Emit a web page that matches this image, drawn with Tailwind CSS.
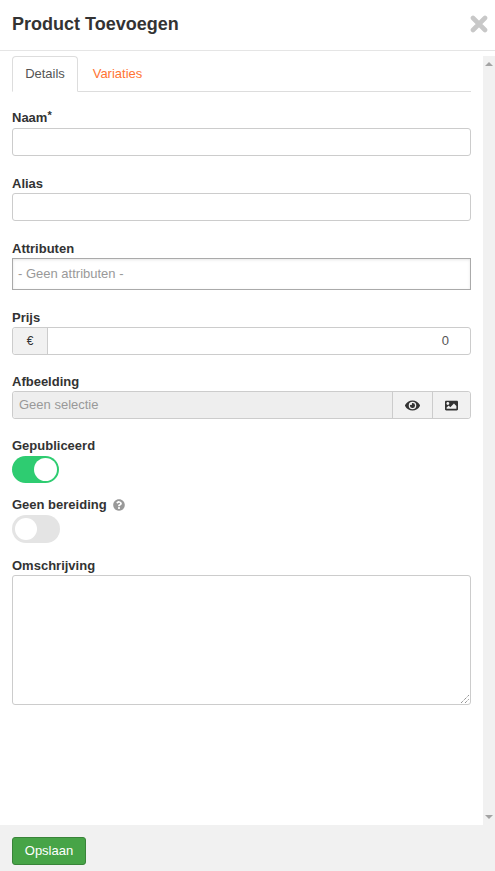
<!DOCTYPE html>
<html lang="nl">
<head>
    <meta charset="UTF-8">
    <meta name="viewport" content="width=device-width, initial-scale=1.0">
    <title>Product Toevoegen</title>
    <script src="https://cdn.jsdelivr.net/npm/@tailwindcss/browser@4"></script>
</head>
<body class="h-[871px] w-[495px] overflow-hidden bg-white flex flex-col font-['Liberation_Sans',Arial,sans-serif] text-[#333]">
    <!-- header -->
    <div class="h-[51px] shrink-0 border-b border-[#e5e5e5] pl-3 pr-[7px] flex items-center justify-between">
        <h1 class="text-[18px] leading-5 font-bold text-[#333] -mt-[2px]">Product Toevoegen</h1>
        <svg class="w-[18px] h-[18px] -mt-[3px]" viewBox="0 0 18 18"><path d="M3 3 L15 15 M15 3 L3 15" stroke="#c8c8c8" stroke-width="4.6" stroke-linecap="round"/></svg>
    </div>

    <!-- body -->
    <div class="flex-1 min-h-0 flex">
        <div class="w-[483px] pl-3 pr-3 pt-[5px]">
            <div class="flex h-[36px] border-b border-[#ddd]">
                <div class="h-[36px] w-[66px] border border-[#ddd] border-b-white rounded-t-[4px] bg-white text-[13px] text-[#555] flex items-center justify-center">Details</div>
                <div class="h-[35px] w-[79px] text-[13px] text-[#ff7433] flex items-center justify-center">Variaties</div>
            </div>

            <div class="flex flex-col mt-[18px]">
                <label class="block text-[13px] leading-[16px] font-bold h-[18px]">Naam<span class="text-[11px] leading-[11px] align-top">*</span></label>
                <div class="h-[28px] border border-[#ccc] rounded-[3px]"></div>

                <label class="block text-[13px] leading-[18px] font-bold h-[18px] mt-[19px]">Alias</label>
                <div class="h-[28px] border border-[#ccc] rounded-[3px]"></div>

                <label class="block text-[13px] leading-[18px] font-bold h-[18px] mt-[19px]">Attributen</label>
                <div class="h-[32px] border border-[#aaa] shadow-[inset_0_1px_3px_rgba(0,0,0,0.1)] px-[5px] flex items-center text-[13px] text-[#999]">- Geen attributen -</div>

                <label class="block text-[13px] leading-[18px] font-bold h-[18px] mt-[19px]">Prijs</label>
                <div class="h-[28px] flex border border-[#ccc] rounded-[3px]">
                    <div class="w-[35px] bg-[#f1f1f1] border-r border-[#ccc] rounded-l-[3px] flex items-center justify-center text-[12px]">€</div>
                    <div class="flex-1 flex items-center justify-end pr-[21px] text-[13px] text-[#555]">0</div>
                </div>

                <label class="block text-[13px] leading-[18px] font-bold h-[18px] mt-[18px]">Afbeelding</label>
                <div class="h-[28px] flex border border-[#ccc] rounded-[3px]">
                    <div class="flex-1 bg-[#eee] rounded-l-[3px] pl-[6px] flex items-center text-[13px] text-[#999]">Geen selectie</div>
                    <div class="w-[40px] bg-[#f1f1f1] border-l border-[#ccc] flex items-center justify-center">
                        <svg class="w-[15px] h-[15px]" viewBox="0 0 576 512"><path fill="#333" d="M572.5 241.4C518.3 135.6 410.9 64 288 64S57.7 135.6 3.5 241.4a32.4 32.4 0 0 0 0 29.2C57.7 376.4 165.1 448 288 448s230.300-71.600 284.500-177.400a32.400 32.400 0 0 0 0-29.200zM288 400a144 144 0 1 1 144-144 143.900 143.900 0 0 1-144 144zm0-240a95.300 95.300 0 0 0-25.300 3.800 47.900 47.900 0 0 1-66.900 66.900A95.800 95.800 0 1 0 288 160z"/></svg>
                    </div>
                    <div class="w-[38px] bg-[#f1f1f1] border-l border-[#ccc] rounded-r-[3px] flex items-center justify-center">
                        <svg class="w-[13px] h-[13px]" viewBox="0 0 512 512"><path fill="#333" d="M464 448H48c-26.500 0-48-21.500-48-48V112c0-26.500 21.500-48 48-48h416c26.500 0 48 21.500 48 48v288c0 26.500-21.500 48-48 48zM112 120c-30.900 0-56 25.100-56 56s25.100 56 56 56 56-25.100 56-56-25.100-56-56-56zM64 384h384V272l-87.500-87.500c-4.700-4.700-12.300-4.700-17 0L208 320l-55.500-55.500c-4.700-4.700-12.300-4.700-17 0L64 336v48z"/></svg>
                    </div>
                </div>

                <label class="block text-[13px] leading-[18px] font-bold h-[19px] mt-[18px]">Gepubliceerd</label>
                <div class="h-[27px] w-[47px] rounded-full bg-[#2ecc71] flex items-center justify-end pr-[2px]">
                    <div class="w-[23px] h-[23px] rounded-full bg-white"></div>
                </div>

                <label class="mt-[12px] text-[13px] leading-[19px] font-bold h-[20px] flex items-start gap-[6px]">
                    Geen bereiding
                    <svg class="w-[12px] h-[12px] mt-[4px]" viewBox="0 0 512 512"><path fill="#999" d="M504 256c0 137-111 248-248 248S8 393 8 256 119 8 256 8s248 111 248 248zM262.700 90c-54.500 0-89.300 23-116.500 63.800-3.500 5.300-2.400 12.400 2.700 16.300l34.700 26.300c5.200 3.900 12.600 3 16.700-2.100 17.900-22.700 30.100-35.800 57.300-35.800 20.400 0 45.700 13.100 45.700 32.900 0 15-12.400 22.700-32.500 34-23.500 13.200-54.600 29.600-54.600 70.500V302c0 6.600 5.400 12 12 12h56c6.600 0 12-5.400 12-12v-1.400c0-28.400 82.800-29.500 82.800-106.200 0-57.700-59.900-102.400-116.300-102.400zM256 338c-25.300 0-45.800 20.500-45.800 45.800 0 25.300 20.500 45.800 45.800 45.800s45.800-20.500 45.800-45.800c0-25.300-20.500-45.800-45.800-45.800z"/></svg>
                </label>
                <div class="h-[28px] w-[48px] rounded-full bg-[#e4e4e4] flex items-center pl-[3px]">
                    <div class="w-[22px] h-[22px] rounded-full bg-white"></div>
                </div>

                <label class="block text-[13px] leading-[18px] font-bold h-[18px] mt-[14px]">Omschrijving</label>
                <div class="h-[130px] border border-[#ccc] rounded-[3px] relative">
                    <svg class="absolute right-0 bottom-0 w-[10px] h-[10px]" viewBox="0 0 10 10"><path d="M1 9 L9 1 M5 9 L9 5" stroke="#666" stroke-width="1" stroke-dasharray="1 1" fill="none"/></svg>
                </div>
            </div>
        </div>

        <!-- scrollbar -->
        <div class="w-[12px] mt-[5px] bg-[#f1f1f1] flex flex-col items-center justify-between py-[6px]">
            <div class="w-0 h-0 border-x-[4px] border-x-transparent border-b-[4px] border-b-[#a3a3a3]"></div>
            <div class="w-0 h-0 border-x-[4px] border-x-transparent border-t-[4px] border-t-[#a3a3a3]"></div>
        </div>
    </div>

    <!-- footer -->
    <div class="h-[46px] shrink-0 bg-[#f1f1f1] pl-3 pt-3">
        <button class="h-[28px] w-[74px] rounded-[3px] bg-[#47a447] border border-[#398439] text-white text-[13px] flex items-center justify-center">Opslaan</button>
    </div>
</body>
</html>
